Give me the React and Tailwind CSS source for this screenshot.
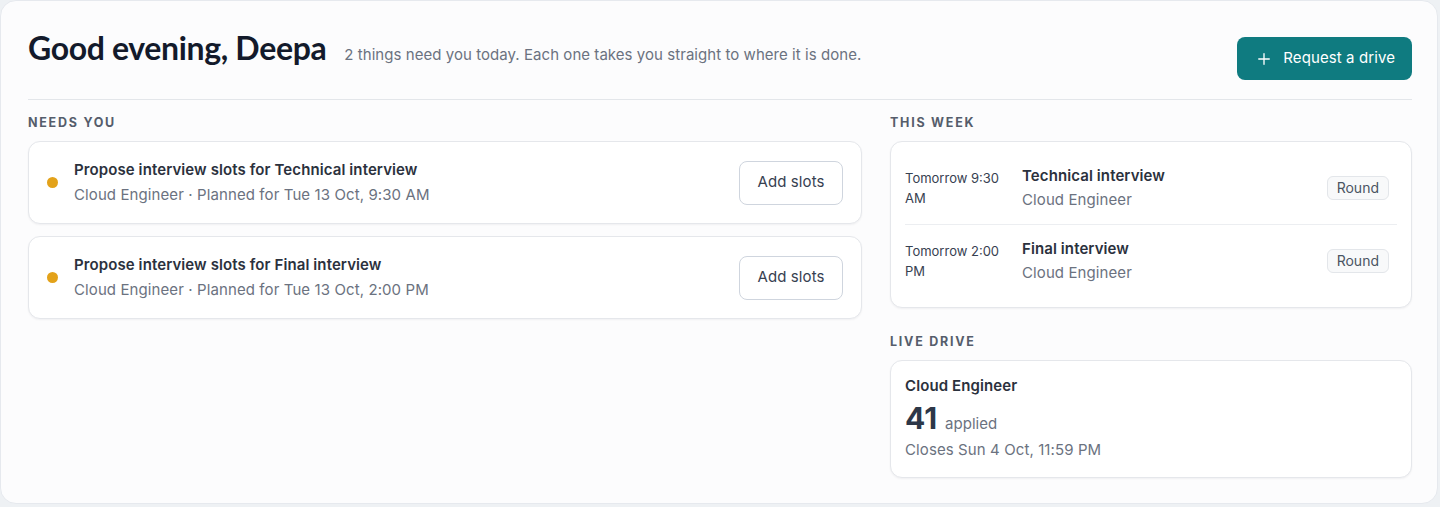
import { Plus } from 'lucide-react'

const tasks = [
  { title: 'Propose interview slots for Technical interview', meta: 'Cloud Engineer · Planned for Tue 13 Oct, 9:30 AM' },
  { title: 'Propose interview slots for Final interview', meta: 'Cloud Engineer · Planned for Tue 13 Oct, 2:00 PM' },
]

const week = [
  { time: 'Tomorrow 9:30 AM', title: 'Technical interview', sub: 'Cloud Engineer' },
  { time: 'Tomorrow 2:00 PM', title: 'Final interview', sub: 'Cloud Engineer' },
]

export default function App() {
  return (
    <div className="h-[507px] w-full bg-[#eef1f4] font-['Inter',sans-serif]">
      <div className="h-[504px] w-[1438px] rounded-2xl border border-[#e6e9ee] bg-[#fcfcfd] pr-[25px] pl-[27px]">
        <header className="flex items-start justify-between border-b border-[#e3e6ea] pt-[27px] pb-[19px]">
          <div className="flex items-baseline">
            <h1 className="font-['Lato',sans-serif] text-[32px] leading-10 font-bold tracking-[-0.35px] text-[#131a2b]">
              Good evening, Deepa
            </h1>
            <p className="ml-[18px] text-[15px] tracking-[0.05px] text-[#6b7280]">
              2 things need you today. Each one takes you straight to where it is done.
            </p>
          </div>
          <button className="mt-[9px] flex h-[43px] items-center gap-2.5 rounded-lg bg-[#0f7b80] pr-[17px] pl-[18px] text-[15px] tracking-[0.1px] text-white">
            <Plus size={18} strokeWidth={1.8} />
            Request a drive
          </button>
        </header>

        <div className="mt-[15px] flex gap-7">
          <section className="w-[834px]">
            <SectionLabel>Needs you</SectionLabel>
            <div className="flex flex-col gap-3">
              {tasks.map((t) => (
                <div
                  key={t.title}
                  className="flex items-center rounded-xl border border-[#e5e7eb] bg-white px-[18px] py-[18px] shadow-[0_1px_2px_rgba(15,23,42,0.05)]"
                >
                  <span className="h-[11px] w-[11px] shrink-0 rounded-full bg-[#e3a21a]" />
                  <div className="ml-4 flex-1">
                    <p className="text-[15px] leading-5 font-semibold tracking-[0.1px] text-[#2b313d]">{t.title}</p>
                    <p className="mt-[5px] text-[15px] leading-5 tracking-[0.1px] text-[#6b7280]">{t.meta}</p>
                  </div>
                  <button className="h-11 w-[104px] rounded-lg border border-[#cfd5de] bg-white text-[15px] tracking-[0.1px] text-[#374151]">
                    Add slots
                  </button>
                </div>
              ))}
            </div>
          </section>

          <section className="w-[522px]">
            <SectionLabel>This week</SectionLabel>
            <div className="rounded-xl border border-[#e5e7eb] bg-white px-[14px] py-2.5 shadow-[0_1px_2px_rgba(15,23,42,0.05)]">
              {week.map((w, i) => (
                <div
                  key={w.title}
                  className={`flex items-center py-[13px] pr-2 ${i > 0 ? 'border-t border-[#eceef1]' : ''}`}
                >
                  <p className="w-[105px] text-[13px] leading-5 text-[#374151]">{w.time}</p>
                  <div className="ml-3 flex-1">
                    <p className="text-[15px] leading-[22px] font-semibold tracking-[0.1px] text-[#2b313d]">{w.title}</p>
                    <p className="mt-0.5 text-[15px] leading-[22px] tracking-[0.1px] text-[#6b7280]">{w.sub}</p>
                  </div>
                  <span className="rounded-md border border-[#e3e6ea] bg-[#f8f9fa] px-[9px] py-px text-sm text-[#4b5563]">
                    Round
                  </span>
                </div>
              ))}
            </div>

            <div className="mt-[26px]">
              <SectionLabel>Live drive</SectionLabel>
              <div className="rounded-xl border border-[#e5e7eb] bg-white px-[14px] pt-[15px] pb-[17px] shadow-[0_1px_2px_rgba(15,23,42,0.05)]">
                <p className="text-[15px] leading-5 font-semibold tracking-[0.1px] text-[#2b313d]">Cloud Engineer</p>
                <div className="mt-1 flex h-9 items-baseline">
                  <span className="text-[30px] leading-9 font-bold text-[#2d3748]">41</span>
                  <span className="ml-2 text-[15px] leading-5 text-[#6b7280]">applied</span>
                </div>
                <p className="mt-1 text-[15px] leading-5 tracking-[0.1px] text-[#6b7280]">Closes Sun 4 Oct, 11:59 PM</p>
              </div>
            </div>
          </section>
        </div>
      </div>
    </div>
  )
}

function SectionLabel({ children }) {
  return (
    <h2 className="mb-2.5 text-[12.5px] leading-4 font-bold tracking-[0.14em] text-[#555d6b] uppercase">
      {children}
    </h2>
  )
}
